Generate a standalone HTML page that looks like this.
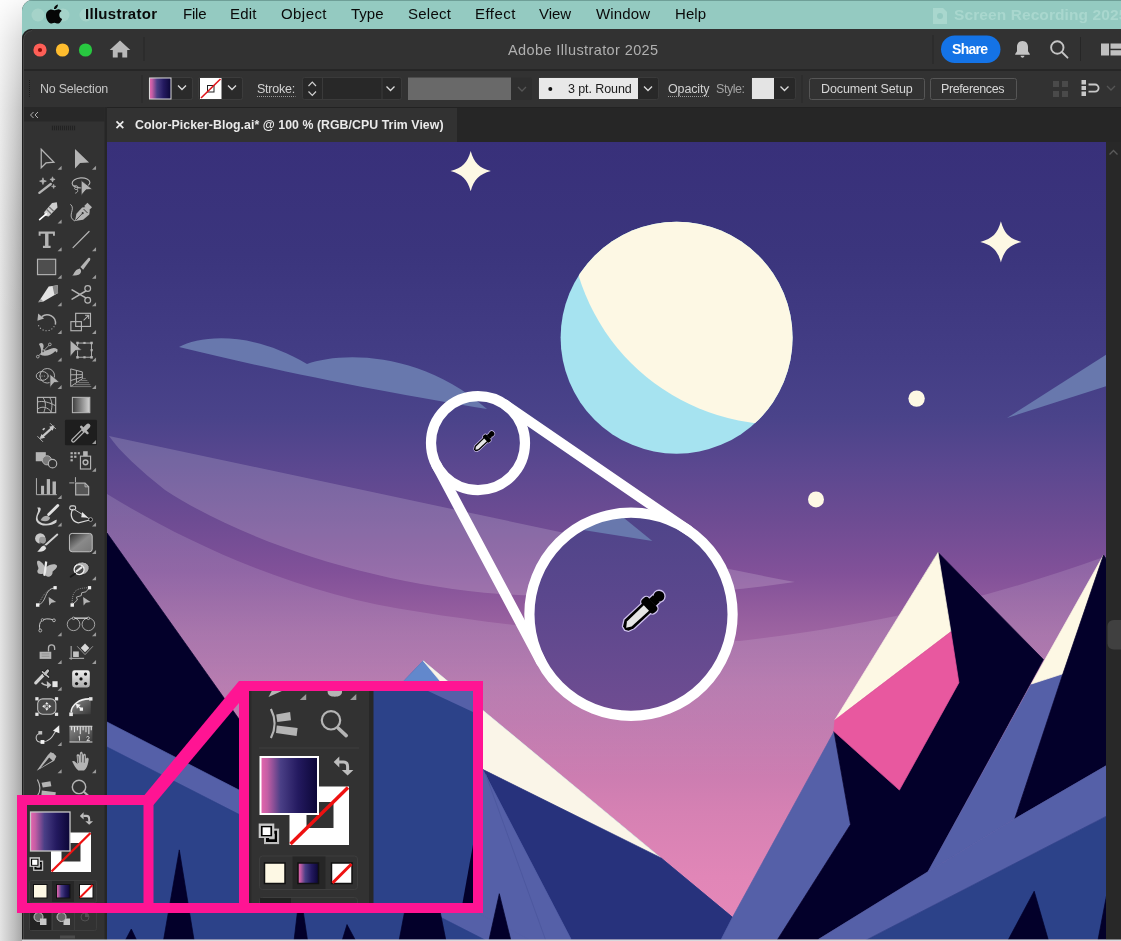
<!DOCTYPE html>
<html><head><meta charset="utf-8"><title>Illustrator</title>
<style>
*{box-sizing:border-box;margin:0;padding:0}
html,body{width:1121px;height:941px;overflow:hidden;background:#e9e9e9;font-family:"Liberation Sans",sans-serif}
#root{position:absolute;left:0;top:0;width:1121px;height:941px;overflow:hidden;
 background:linear-gradient(180deg,rgba(255,255,255,0.92) 0px,rgba(255,255,255,0.6) 40px,rgba(255,255,255,0.3) 110px,rgba(255,255,255,0.08) 220px,rgba(255,255,255,0) 320px),linear-gradient(90deg,#e4e4e4 0px,#d2d2d2 7px,#c0c0c0 14px,#adadad 20px,#a2a2a2 22px)}
.abs{position:absolute}
#win{position:absolute;left:22px;top:0;width:1099px;height:940px;background:#323232;border-top-left-radius:11px;overflow:hidden}
#menubar{position:absolute;left:0;top:0;width:1099px;height:42px;background:#94cac1;border-top:1px solid #6f9f98}
#menubar span{position:absolute;top:5px;font-size:15.3px;color:#0a0a0a;white-space:nowrap;line-height:18px}
#titlebar{position:absolute;left:0;top:29px;width:1099px;height:40px;background:#323232;border-top-left-radius:9px}
#ctrl{position:absolute;left:0;top:69px;width:1099px;height:38px;background:#323232;border-top:2px solid #262626}
.t{will-change:transform;position:absolute;white-space:nowrap;line-height:14px;font-size:12px;color:#c6c6c6}
.m{font-size:15.3px;color:#0a0a0a;line-height:18px}
.box{position:absolute;top:78px;height:22px}
svg{position:absolute;left:0;top:0;overflow:visible}
</style></head><body>
<div id="root">
<div id="win">
 <div id="menubar">
 </div>
 <div id="titlebar"></div>
 <div id="ctrl"></div>
</div>
<svg width="1121" height="941" viewBox="0 0 1121 941">
<defs>
 <linearGradient id="sky" gradientUnits="userSpaceOnUse" x1="0" y1="142" x2="0" y2="941">
  <stop offset="0" stop-color="#38307a"/>
  <stop offset="0.14" stop-color="#3b357d"/>
  <stop offset="0.27" stop-color="#433d85"/>
  <stop offset="0.345" stop-color="#4a438a"/>
  <stop offset="0.41" stop-color="#5c4890"/>
  <stop offset="0.475" stop-color="#6e4c93"/>
  <stop offset="0.54" stop-color="#825199"/>
  <stop offset="0.60" stop-color="#98609f"/>
  <stop offset="0.68" stop-color="#b272aa"/>
  <stop offset="0.76" stop-color="#c57aaf"/>
  <stop offset="0.84" stop-color="#d681b3"/>
  <stop offset="0.92" stop-color="#e186b7"/>
  <stop offset="1" stop-color="#e689b9"/>
 </linearGradient>
 <linearGradient id="hz" gradientUnits="userSpaceOnUse" x1="0" y1="494" x2="0" y2="780">
  <stop offset="0" stop-color="#fff" stop-opacity="0.14"/><stop offset="0.5" stop-color="#fff" stop-opacity="0.12"/><stop offset="1" stop-color="#fff" stop-opacity="0"/>
 </linearGradient>
 <clipPath id="cv"><rect x="107" y="142" width="999" height="797.5"/></clipPath>
 <clipPath id="moonclip"><circle cx="676.6" cy="337.7" r="116"/></clipPath>
 <clipPath id="bigc"><circle cx="631" cy="614.3" r="101.6"/></clipPath>
 <linearGradient id="bigfill" gradientUnits="userSpaceOnUse" x1="0" y1="512" x2="0" y2="716">
  <stop offset="0" stop-color="#4e4489"/><stop offset="0.4" stop-color="#5a478d"/><stop offset="1" stop-color="#704d92"/>
 </linearGradient>
</defs>
<g clip-path="url(#cv)">
 <rect x="107" y="142" width="999" height="799" fill="url(#sky)"/>
 <!-- haze band 2 (lower big) -->
 <path d="M107 494 C190 545 300 595 420 612 C520 628 640 640 740 641 C880 625 1000 595 1107 556 V941 H107 Z" fill="url(#hz)"/>
 <!-- haze band 1 -->
 <path d="M109 436 L560 532 C640 550 720 568 795 582 C700 596 600 600 500 594 C380 585 250 545 165 490 C140 470 120 452 109 436 Z" fill="#ffffff" opacity="0.17"/>
 <!-- clouds -->
 <path d="M179 347 C200 336 250 330 307 364 C340 352 420 350 487 409 C400 395 280 372 179 347 Z" fill="#6878ad"/>
 <path d="M1007 418 L1107 354 V386 Z" fill="#6878ad"/>
 <!-- stars -->
 <path d="M470.7 150.9 C474.1 162.9 478.9 167.7 490.9 171.1 C478.9 174.5 474.1 179.3 470.7 191.3 C467.3 179.3 462.5 174.5 450.5 171.1 C462.5 167.7 467.3 162.9 470.7 150.9 Z" fill="#fdf8e4"/>
 <path d="M1000.9 221.3 C1004.3 233.7 1009.1 238.5 1021.5 241.9 C1009.1 245.3 1004.3 250.1 1000.9 262.5 C997.5 250.1 992.7 245.3 980.3 241.9 C992.7 238.5 997.5 233.7 1000.9 221.3 Z" fill="#fdf8e4"/>
 <circle cx="916.6" cy="398.6" r="8.2" fill="#fdf8e4"/>
 <circle cx="816" cy="499.4" r="8" fill="#fdf8e4"/>
 <!-- moon -->
 <circle cx="676.6" cy="337.7" r="116" fill="#a6e3f0"/>
 <circle cx="779.5" cy="214.5" r="210" fill="#fdf8e4" clip-path="url(#moonclip)"/>
 <!-- left dark mountain -->
 <path d="M107 533 L300 805 L300 941 L107 941 Z" fill="#03002a" stroke="#03002a" stroke-width="0.700"/>
 <!-- central peak -->
 <path d="M423.200 660.800 L380 706 L330 800 L483 941 L740 941 L732.500 917.300 Z" fill="#5560a8" stroke="#5560a8" stroke-width="0.700"/>
 <path d="M423.200 660.800 L404 681 L440 681 Z" fill="#6288cc" stroke="#6288cc" stroke-width="0.700"/>
 <path d="M423.200 660.800 L661 857.900 L483 769.600 L440 681 Z" fill="#faf5e8" stroke="#faf5e8" stroke-width="0.700"/>
 <path d="M483 769.600 L661 857.900 L732.500 917.300 L720.400 941 L572 941 Z" fill="#27327c" stroke="#27327c" stroke-width="0.700"/>
 <path d="M483 770 L572 941 L440 941 L400 800 Z" fill="#5560a8" stroke="#5560a8" stroke-width="0.700"/>
 <path d="M485.600 774 L546 941" stroke="#4d589f" stroke-width="1" fill="none"/>
 <!-- left band + blue -->
 <path d="M107 722 L532 941 L107 941 Z" fill="#5560a8" stroke="#5560a8" stroke-width="0.700"/>
 <path d="M107 747 L487 941 L107 941 Z" fill="#2c4289" stroke="#2c4289" stroke-width="0.700"/>
 <path d="M179.300 849.900 L163.400 941 L194.200 941 Z" fill="#03002a" stroke="#03002a" stroke-width="0.700"/>
 <path d="M131.300 929 L125 941 L137 941 Z" fill="#03002a" stroke="#03002a" stroke-width="0.700"/>
 <path d="M300 890 L294 941 L307.600 941 Z" fill="#03002a" stroke="#03002a" stroke-width="0.700"/>
 <path d="M347 924.600 L342 941 L355.800 941 Z" fill="#03002a" stroke="#03002a" stroke-width="0.700"/>
 <path d="M422 821 L399 941 L446 941 Z" fill="#03002a" stroke="#03002a" stroke-width="0.700"/>
 <path d="M499.300 893.700 L488.800 941 L511 941 Z" fill="#03002a" stroke="#03002a" stroke-width="0.700"/>
 <!-- right mountains -->
 <path d="M834 731.6 L850.5 824.5 L776.6 941 L720.4 941 L732.5 917.3 Z" fill="#5560a8" stroke="#5560a8" stroke-width="0.700"/>
 <path d="M938 552.4 L1043.4 659.5 L928 871.7 L815.8 941 L776.6 941 L850.5 824.5 L834 731.3 Z" fill="#03002a" stroke="#03002a" stroke-width="0.700"/>
 <path d="M938 552.4 L950.9 631.7 L834.9 719.9 Z" fill="#fdf8e4" stroke="#fdf8e4" stroke-width="0.700"/>
 <path d="M834.9 720 L950.9 631.7 L958.9 682.7 L899.4 790.1 L833.8 731.3 Z" fill="#e8589f" stroke="#e8589f" stroke-width="0.700"/>
 <path d="M1031.4 684 L1062.9 673.8 L1014.8 818.8 L928 871.7 Z" fill="#5560a8" stroke="#5560a8" stroke-width="0.700"/>
 <path d="M1103.5 555 L1045 659.5 L1031.4 684 L1062.9 673.8 Z" fill="#fdf8e4" stroke="#fdf8e4" stroke-width="0.700"/>
 <path d="M1103.5 555 L1107 560 L1107 765.2 L1014.8 818.8 L1062.9 673.8 Z" fill="#03002a" stroke="#03002a" stroke-width="0.700"/>
 <path d="M815.8 941 L928 871.7 L1014.8 818.8 L1107 765.2 L1107 815.9 L864.4 941 Z" fill="#5560a8" stroke="#5560a8" stroke-width="0.700"/>
 <path d="M864.4 941 L1107 815.9 L1107 941 Z" fill="#2c4289" stroke="#2c4289" stroke-width="0.700"/>
 <path d="M1034.2 891.2 L1007.6 941 L1048.6 941 Z" fill="#03002a" stroke="#03002a" stroke-width="0.700"/>
 <path d="M1107 893 L1097.8 941 L1107 941 Z" fill="#03002a" stroke="#03002a" stroke-width="0.700"/>
 <!-- magnifier -->
 <circle cx="631" cy="614.3" r="101.6" fill="url(#bigfill)"/>
 <g clip-path="url(#bigc)"><path d="M560 515 L624 518 L652.3 541 L583 530 Z" fill="#6878ad"/></g>
 <g fill="none" stroke="#ffffff" stroke-width="10.2">
  <circle cx="631" cy="614.3" r="101.6"/>
  <circle cx="478" cy="443.1" r="47"/>
  <path d="M436.5 465.2 L541.3 662 M504.6 404.3 L688.5 530.5" stroke-linecap="round"/>
 </g>
<g transform="translate(623.700,629.100) rotate(-42.900)">
  <g fill="#cfc2ee" stroke="#cfc2ee" stroke-width="2.600" stroke-linejoin="round">
   <path d="M0.500 1.500 L1.500 -2.500 L7 -6.200 L33 -6.200 V6.200 H8 L2.500 4.500 Z"/>
   <rect x="30.500" y="-9" width="9" height="18" rx="3.500"/>
   <rect x="39" y="-4.800" width="5.500" height="9.600"/>
   <circle cx="48.200" cy="0" r="5.400"/>
  </g>
  <g fill="#000000">
   <path d="M0.500 1.500 L1.500 -2.500 L7 -6.200 L33 -6.200 V6.200 H8 L2.500 4.500 Z"/>
   <rect x="30.500" y="-9" width="9" height="18" rx="3.500"/>
   <rect x="39" y="-4.800" width="5.500" height="9.600"/>
   <circle cx="48.200" cy="0" r="5.400"/>
  </g>
  <path d="M2.800 0.600 L7.500 -3.300 L31 -3.800 L31 3.800 L7.500 3.500 Z" fill="#e6e6e6"/>
 </g>
<g transform="translate(474.300,450.600) rotate(-43.800) scale(0.500)">
  <g fill="#cfc2ee" stroke="#cfc2ee" stroke-width="2.600" stroke-linejoin="round">
   <path d="M0.500 1.500 L1.500 -2.500 L7 -6.200 L33 -6.200 V6.200 H8 L2.500 4.500 Z"/>
   <rect x="30.500" y="-9" width="9" height="18" rx="3.500"/>
   <rect x="39" y="-4.800" width="5.500" height="9.600"/>
   <circle cx="48.200" cy="0" r="5.400"/>
  </g>
  <g fill="#000000">
   <path d="M0.500 1.500 L1.500 -2.500 L7 -6.200 L33 -6.200 V6.200 H8 L2.500 4.500 Z"/>
   <rect x="30.500" y="-9" width="9" height="18" rx="3.500"/>
   <rect x="39" y="-4.800" width="5.500" height="9.600"/>
   <circle cx="48.200" cy="0" r="5.400"/>
  </g>
  <path d="M2.800 0.600 L7.500 -3.300 L31 -3.800 L31 3.800 L7.500 3.500 Z" fill="#e6e6e6"/>
 </g>
</g>
</svg>
<svg width="1121" height="941" viewBox="0 0 1121 941">
<defs>
 <linearGradient id="fillg" x1="0" y1="0" x2="1" y2="0">
  <stop offset="0" stop-color="#e765ad"/><stop offset="0.12" stop-color="#c45ea5"/><stop offset="0.35" stop-color="#4a3f86"/><stop offset="0.65" stop-color="#241a60"/><stop offset="1" stop-color="#0b0636"/>
 </linearGradient>
</defs>
<!-- menubar icons -->
<g opacity="0.35" fill="#c6e6d8">
 <circle cx="38" cy="15" r="6.5"/><circle cx="63" cy="15" r="6.5"/><circle cx="86" cy="15" r="6.5"/>
</g>
<g id="apple" fill="#060606">
 <path d="M58.6 9.3 C57.3 9.3 55.9 10.2 55.0 10.2 C54.0 10.2 52.8 9.4 51.4 9.4 C48.7 9.4 46.0 11.7 46.0 15.6 C46.0 19.6 48.9 23.6 50.9 23.6 C52.0 23.6 52.9 22.8 54.4 22.8 C55.9 22.8 56.5 23.6 57.8 23.6 C59.8 23.6 61.5 20.6 62.1 18.9 C60.3 18.2 59.3 16.6 59.3 14.9 C59.3 13.3 60.2 11.9 61.6 11.1 C60.8 10.0 59.7 9.3 58.6 9.3 Z"/>
 <path d="M57.9 4.6 C58.0 6.0 57.4 7.1 56.7 7.9 C56.0 8.7 54.9 9.2 54.0 9.1 C53.9 7.9 54.5 6.7 55.2 6.0 C55.9 5.2 57.0 4.7 57.9 4.6 Z"/>
</g>
<g fill="#a9d7ce"><path d="M933 8 H943 L947 12 V24 H933 Z"/><circle cx="940" cy="16" r="3" fill="#94cac1"/></g>
<!-- traffic lights -->
<circle cx="40" cy="50" r="6.6" fill="#fe5f57"/><circle cx="40" cy="50" r="2.1" fill="#8c0a04"/>
<circle cx="62.5" cy="50" r="6.6" fill="#febc2e"/>
<circle cx="85.5" cy="50" r="6.6" fill="#28c840"/>
<!-- home -->
<path d="M120 40.5 L130.3 50 H127.2 V57.6 H122.3 V52.4 H117.7 V57.6 H112.8 V50 H109.7 Z" fill="#b8b8b8"/>
<rect x="143.5" y="37" width="1" height="24" fill="#262626"/>
<!-- title right -->
<rect x="932.5" y="35" width="1" height="29" fill="#262626"/>
<rect x="941" y="35.5" width="59.5" height="27.5" rx="13.75" fill="#1473e6"/>
<g fill="#c4c4c4">
 <path d="M1022.5 41 C1026.2 41 1028 43.8 1028 47 V51.2 L1029.8 54 V54.8 H1015.2 V54 L1017 51.2 V47 C1017 43.8 1018.8 41 1022.5 41 Z"/>
 <path d="M1020.6 55.8 H1024.4 C1024.4 56.9 1023.6 57.7 1022.5 57.7 C1021.4 57.7 1020.6 56.9 1020.6 55.8 Z"/>
</g>
<g fill="none" stroke="#c4c4c4" stroke-width="1.9"><circle cx="1057.3" cy="47.5" r="6.2"/><path d="M1061.8 52 L1067.5 57.7" stroke-linecap="round"/></g>
<rect x="1080" y="37" width="1" height="24" fill="#262626"/>
<g fill="#c0c0c0"><rect x="1101" y="43.5" width="8" height="12"/><rect x="1110.5" y="43.5" width="11" height="5.2"/><rect x="1110.5" y="50.2" width="11" height="5.3"/></g>
<!-- control bar -->
<g fill="#1c1c1c"><rect x="29" y="80" width="1" height="1"/><rect x="29" y="82" width="1" height="1"/><rect x="29" y="84" width="1" height="1"/><rect x="29" y="86" width="1" height="1"/><rect x="29" y="88" width="1" height="1"/><rect x="29" y="90" width="1" height="1"/><rect x="29" y="92" width="1" height="1"/><rect x="29" y="94" width="1" height="1"/><rect x="29" y="96" width="1" height="1"/></g>
<rect x="141.5" y="75" width="1" height="28" fill="#282828"/>
<!-- fill swatch -->
<rect x="148.5" y="77.5" width="44" height="22" rx="2" fill="#2a2a2a" stroke="#3c3c3c"/>
<rect x="149.5" y="78" width="21.5" height="21" fill="url(#fillg)" stroke="#d8d8d8" stroke-width="1"/>
<path d="M178 85.5 L182 89.5 L186 85.5" fill="none" stroke="#dcdcdc" stroke-width="1.3"/>
<!-- stroke swatch -->
<rect x="198.5" y="77.5" width="44" height="22" rx="2" fill="#2a2a2a" stroke="#3c3c3c"/>
<rect x="200" y="78" width="21.5" height="21" fill="#ffffff"/>
<rect x="207.5" y="85.5" width="6.5" height="6.5" fill="none" stroke="#222" stroke-width="1"/>
<path d="M201 98 L220.5 79" stroke="#e0141a" stroke-width="1.6"/>
<path d="M228 85.5 L232 89.5 L236 85.5" fill="none" stroke="#dcdcdc" stroke-width="1.3"/>
<!-- stroke weight -->
<path d="M257 96.5 H295.5" stroke="#9a9a9a" stroke-width="1" stroke-dasharray="1 1"/>
<rect x="302.5" y="77.5" width="99" height="22" rx="2" fill="#282828" stroke="#3a3a3a"/>
<rect x="322" y="78" width="1" height="21" fill="#3a3a3a"/><rect x="381.5" y="78" width="1" height="21" fill="#3a3a3a"/>
<path d="M308.5 86 L312.3 82.2 L316 86 M308.5 91.5 L312.3 95.3 L316 91.5" fill="none" stroke="#d0d0d0" stroke-width="1.2"/>
<path d="M386.5 86.5 L390.5 90.5 L394.5 86.5" fill="none" stroke="#dcdcdc" stroke-width="1.3"/>
<!-- grey var width -->
<rect x="408" y="77.5" width="124" height="22.5" rx="2" fill="#2e2e2e"/>
<rect x="408" y="77.5" width="103" height="22.5" fill="#696969"/>
<path d="M518 87 L522 91 L526 87" fill="none" stroke="#555" stroke-width="1.3"/>
<!-- brush -->
<rect x="538.5" y="77.5" width="120" height="22" rx="2" fill="#282828" stroke="#3a3a3a"/>
<rect x="539" y="78" width="99" height="21" fill="#e8e8e8"/>
<circle cx="550.3" cy="89" r="2" fill="#111"/>
<path d="M644 86.5 L648 90.5 L652 86.5" fill="none" stroke="#dcdcdc" stroke-width="1.3"/>
<path d="M668 96.5 H710" stroke="#9a9a9a" stroke-width="1" stroke-dasharray="1 1"/>
<!-- style -->
<rect x="751.5" y="77.5" width="44" height="22" rx="2" fill="#282828" stroke="#3a3a3a"/>
<rect x="752" y="78" width="22" height="21" fill="#e4e4e4"/>
<path d="M780.5 86.5 L784.5 90.5 L788.5 86.5" fill="none" stroke="#dcdcdc" stroke-width="1.3"/>
<rect x="801.5" y="75" width="1" height="28" fill="#282828"/>
<rect x="809.5" y="78.500" width="115" height="21" rx="2" fill="#323232" stroke="#565656"/>
<rect x="930.5" y="78.500" width="86" height="21" rx="2" fill="#323232" stroke="#565656"/>
<!-- right icons -->
<g fill="#4a4a4a"><rect x="1053" y="81" width="6" height="6"/><rect x="1062" y="81" width="6" height="6"/><rect x="1053" y="91" width="6" height="6"/><rect x="1062" y="91" width="6" height="6"/></g>
<g fill="#c8c8c8"><rect x="1081.500" y="80" width="4.500" height="4.500"/><rect x="1081.500" y="86" width="4.500" height="4"/><rect x="1081.500" y="91.500" width="4.500" height="4.500"/></g>
<path d="M1088.5 84.5 H1095 A3.6 3.6 0 0 1 1095 91.700 H1088.500" fill="none" stroke="#c8c8c8" stroke-width="1.800"/>
<path d="M1107 86 L1111 90 L1115 86" fill="none" stroke="#555" stroke-width="1.300"/>
<!-- tab bar -->
<rect x="22" y="107" width="1099" height="35" fill="#262626"/>
<rect x="107" y="108" width="350" height="34" fill="#323232"/>
<rect x="22" y="107" width="1099" height="1" fill="#222"/>
<path d="M116.500 121.400 L123.300 128.200 M123.300 121.400 L116.500 128.200" stroke="#ececec" stroke-width="1.700"/>
<!-- tool panel -->
<rect x="22" y="107" width="85" height="834" fill="#323232"/>
<rect x="22" y="107" width="82.500" height="14.500" fill="#282828"/>
<rect x="104.500" y="107" width="2.500" height="834" fill="#262626"/>
<path d="M23.500 941 V40 A9 9 0 0 1 32 30.500" fill="none" stroke="#474747" stroke-width="1"/><path d="M22.500 941 V40 A10 10 0 0 1 32 29.500" fill="none" stroke="#1e1e1e" stroke-width="1"/>
<path d="M33.500 112 L30.500 115 L33.500 118 M38 112 L35 115 L38 118" fill="none" stroke="#b0b0b0" stroke-width="1"/>
<path d="M52.500 125.700 V130.200 M54.500 125.700 V130.200 M56.500 125.700 V130.200 M58.500 125.700 V130.200 M60.500 125.700 V130.200 M62.500 125.700 V130.200 M64.500 125.700 V130.200 M66.500 125.700 V130.200 M68.500 125.700 V130.200 M70.500 125.700 V130.200 M72.500 125.700 V130.200 M74.500 125.700 V130.200" stroke="#222222" stroke-width="1.100"/>
<!-- right scrollbar -->
<rect x="1106" y="142" width="15" height="799" fill="#282828"/>
<path d="M1109.500 154.500 L1113.500 150.500 L1117.500 154.500" fill="none" stroke="#5a5a5a" stroke-width="1.300"/>
<rect x="1107.500" y="620" width="20" height="29.500" rx="6" fill="#404040"/>
<!-- bottom light line -->
<rect x="22" y="939.500" width="1099" height="1.500" fill="#d9d9dd"/>
</svg>
<svg width="1121" height="941" viewBox="0 0 1121 941">
<defs>
 <linearGradient id="gradtool" x1="0" y1="0" x2="1" y2="0"><stop offset="0" stop-color="#3c3c3c"/><stop offset="1" stop-color="#d4d4d4"/></linearGradient>
 <linearGradient id="texg" x1="0" y1="0" x2="1" y2="1"><stop offset="0" stop-color="#2a2a2a"/><stop offset="0.5" stop-color="#8a8a8a"/><stop offset="1" stop-color="#777"/></linearGradient>
 <linearGradient id="dkg" x1="0" y1="0" x2="0" y2="1"><stop offset="0" stop-color="#f0f0f0"/><stop offset="1" stop-color="#aaaaaa"/></linearGradient>
 <linearGradient id="rulg" x1="0" y1="0" x2="1" y2="1"><stop offset="0" stop-color="#8a8a8a"/><stop offset="1" stop-color="#3a3a3a"/></linearGradient>
</defs>
<!-- W140 rows 1-3 -->
<g transform="translate(20,140) scale(0.095643)" fill="#b4b4b4" stroke="none">
 <path d="M222 97 L355 232 L272 240 L222 290 Z" fill="none" stroke="#b4b4b4" stroke-width="13"/>
 <path d="M435 268 V310 H393 Z" fill="#9a9a9a"/>
 <path d="M575 93 L722 235 L628 240 L575 297 Z"/>
 <path d="M795 268 V310 H753 Z" fill="#9a9a9a"/>
 <path d="M202 553 L322 460" stroke="#b4b4b4" stroke-width="24" stroke-linecap="round"/>
 <path d="M240 395 Q240 430 275 430 Q240 430 240 465 Q240 430 205 430 Q240 430 240 395 Z" stroke="#b4b4b4" stroke-width="8"/>
 <path d="M340 385 Q340 412 367 412 Q340 412 340 439 Q340 412 313 412 Q340 412 340 385 Z" stroke="#b4b4b4" stroke-width="8"/>
 <path d="M352 462 Q352 485 375 485 Q352 485 352 508 Q352 485 329 485 Q352 485 352 462 Z" stroke="#b4b4b4" stroke-width="5"/>
 <ellipse cx="638" cy="448" rx="93" ry="52" fill="none" stroke="#b4b4b4" stroke-width="12" transform="rotate(-4 638 448)"/>
 <path d="M562 482 C600 465 625 500 597 515 C572 527 558 500 585 490 M597 515 C612 532 600 550 578 556" fill="none" stroke="#b4b4b4" stroke-width="10"/>
 <path d="M640 422 L758 515 L690 521 L640 580 Z" stroke="#323232" stroke-width="8"/>
 <path d="M385 652 L392 705 L300 800 L262 792 L252 755 L335 660 Z" fill="#cfcfcf"/>
 <path d="M305 700 L352 745 M280 727 L325 772" stroke="#777" stroke-width="14"/>
 <path d="M205 832 L275 772" stroke="#ffffff" stroke-width="17" stroke-linecap="round"/>
 <path d="M435 832 V874 H393 Z" fill="#9a9a9a"/>
 <path d="M575 848 L590 770 L650 705 L692 700 L730 738 L725 778 L660 835 Z"/>
 <path d="M585 838 L648 772" stroke="#323232" stroke-width="9"/><circle cx="655" cy="765" r="11" fill="#323232"/>
 <rect x="-34" y="-24" width="68" height="48" transform="translate(712,697) rotate(45)"/>
 <path d="M665 722 L706 763" stroke="#323232" stroke-width="10"/>
 <path d="M527 672 C590 720 480 800 575 848" fill="none" stroke="#b4b4b4" stroke-width="10"/>
</g>
<!-- W225 rows 4-6 -->
<g transform="translate(20,225) scale(0.095643)" fill="#b4b4b4" stroke="none">
 <path d="M195 68 H365 V112 H345 V92 H298 V218 H320 V240 H240 V218 H262 V92 H215 V112 H195 Z"/>
 <path d="M435 232 V274 H393 Z" fill="#9a9a9a"/>
 <path d="M555 236 L722 68" stroke="#b4b4b4" stroke-width="13" stroke-linecap="round"/>
 <path d="M795 232 V274 H753 Z" fill="#9a9a9a"/>
 <rect x="183" y="358" width="190" height="161" fill="#4e4e4e" stroke="#b4b4b4" stroke-width="12"/>
 <path d="M435 520 V562 H393 Z" fill="#9a9a9a"/>
 <path d="M632 440 L712 348 C728 335 742 350 732 368 L660 468 Z"/>
 <path d="M545 527 C570 520 560 470 625 455 C655 480 640 540 545 527 Z"/>
 <path d="M795 520 V562 H753 Z" fill="#9a9a9a"/>
 <path d="M192 808 L300 642 L395 630 L398 712 L245 800 Z" fill="#e4e4e4"/>
 <path d="M340 640 L395 630 L398 712 L360 730 Z" fill="#888"/>
 <path d="M192 808 L215 772 L245 800 Z" fill="#999"/>
 <path d="M435 808 V850 H393 Z" fill="#9a9a9a"/>
 <circle cx="708" cy="664" r="30" fill="none" stroke="#b4b4b4" stroke-width="13"/>
 <circle cx="708" cy="787" r="30" fill="none" stroke="#b4b4b4" stroke-width="13"/>
 <path d="M688 690 L545 775 M688 762 L545 678" stroke="#b4b4b4" stroke-width="17" stroke-linecap="round"/>
 <path d="M795 808 V850 H753 Z" fill="#9a9a9a"/>
</g>
<!-- W305 rows 7-9 -->
<g transform="translate(20,305) scale(0.095643)" fill="#b4b4b4" stroke="none">
 <path d="M228 122 A88 88 0 0 1 370 205" fill="none" stroke="#b4b4b4" stroke-width="15"/>
 <path d="M190 90 L252 142 L182 165 Z"/>
 <path d="M193 212 A92 92 0 0 0 358 222" fill="none" stroke="#b4b4b4" stroke-width="11" stroke-dasharray="11 21"/>
 <path d="M435 262 V304 H393 Z" fill="#9a9a9a"/>
 <rect x="582" y="87" width="155" height="137" fill="none" stroke="#b4b4b4" stroke-width="12"/>
 <rect x="532" y="174" width="110" height="95" fill="none" stroke="#b4b4b4" stroke-width="12"/>
 <path d="M665 160 L712 113 M680 108 H718 V146" fill="none" stroke="#b4b4b4" stroke-width="11"/>
 <path d="M795 262 V304 H753 Z" fill="#9a9a9a"/>
 <path d="M198 408 C235 375 262 420 238 462 C290 510 320 420 392 462 C395 500 380 505 370 480 C330 520 270 545 212 520 C235 490 215 440 198 408 Z"/>
 <path d="M188 538 L310 415" stroke="#b4b4b4" stroke-width="9"/>
 <circle cx="186" cy="540" r="14" fill="#323232" stroke="#b4b4b4" stroke-width="9"/>
 <circle cx="312" cy="412" r="14" fill="#323232" stroke="#b4b4b4" stroke-width="9"/>
 <circle cx="242" cy="482" r="14" fill="#323232" stroke="#b4b4b4" stroke-width="9"/>
 <path d="M435 550 V592 H393 Z" fill="#9a9a9a"/>
 <rect x="602" y="398" width="145" height="148" fill="none" stroke="#b4b4b4" stroke-width="10"/>
 <rect x="662" y="386" width="24" height="22"/><rect x="662" y="536" width="24" height="22"/><rect x="738" y="460" width="22" height="24"/>
 <rect x="588" y="384" width="26" height="26"/><rect x="735" y="384" width="26" height="26"/><rect x="588" y="534" width="26" height="26"/><rect x="735" y="534" width="26" height="26"/>
 <path d="M525 368 L645 470 L578 476 L525 538 Z" stroke="#323232" stroke-width="6"/>
 <path d="M795 550 V592 H753 Z" fill="#9a9a9a"/>
 <ellipse cx="232" cy="742" rx="62" ry="46" fill="none" stroke="#b4b4b4" stroke-width="10"/>
 <circle cx="285" cy="740" r="76" fill="none" stroke="#b4b4b4" stroke-width="10"/>
 <circle cx="205" cy="742" r="6"/><circle cx="230" cy="742" r="6"/><circle cx="255" cy="742" r="6"/><circle cx="300" cy="742" r="6"/>
 <path d="M313 722 L412 806 L355 812 L313 864 Z" stroke="#323232" stroke-width="8"/>
 <path d="M435 836 V878 H393 Z" fill="#9a9a9a"/>
 <path d="M530 668 V852 L652 772 V700 Z M530 730 L652 728 M530 790 L652 752 M590 683 V812" fill="none" stroke="#b4b4b4" stroke-width="10"/>
 <path d="M655 770 H688 M640 790 H705 M610 812 H722 M575 833 H735 M530 853 H745" stroke="#9c9c9c" stroke-width="7"/>
 <path d="M795 836 V878 H753 Z" fill="#9a9a9a"/>
</g>
<!-- W390 rows 10-12 -->
<g transform="translate(20,390) scale(0.095643)" fill="#b4b4b4" stroke="none">
 <rect x="183" y="77" width="190" height="160" fill="none" stroke="#b4b4b4" stroke-width="12"/>
 <path d="M240 77 C275 130 270 180 248 237 M310 77 C345 130 335 190 320 237 M183 125 C240 110 310 130 373 165 M183 200 C230 165 290 175 335 237" fill="none" stroke="#b4b4b4" stroke-width="10"/>
 <rect x="548" y="77" width="182" height="160" fill="url(#gradtool)" stroke="#b4b4b4" stroke-width="11"/>
 <path d="M222 498 L345 388" stroke="#c8c8c8" stroke-width="22"/>
 <path d="M205 512 L262 500 L225 460 Z M360 372 L305 385 L342 425 Z" fill="#c8c8c8"/>
 <path d="M182 483 L240 542 M315 348 L375 408" stroke="#b4b4b4" stroke-width="10"/>
 <path d="M238 418 L258 400" stroke="#c8c8c8" stroke-width="17"/>
 <rect x="470" y="312" width="335" height="266" rx="14" fill="#1e1e1e"/>
 <path d="M662 423 L557 528" stroke="#b4b4b4" stroke-width="46" stroke-linecap="round"/>
 <path d="M655 430 L558 527" stroke="#1e1e1e" stroke-width="20" stroke-linecap="round"/>
 <path d="M640 385 L705 450" stroke="#b4b4b4" stroke-width="26" stroke-linecap="round"/>
 <path d="M670 418 L712 375" stroke="#b4b4b4" stroke-width="48" stroke-linecap="round"/>
 <path d="M795 522 V564 H753 Z" fill="#9a9a9a"/>
 <rect x="165" y="650" width="105" height="95"/>
 <circle cx="282" cy="735" r="48" fill="#7a7a7a" stroke="#b4b4b4" stroke-width="10"/>
 <circle cx="340" cy="770" r="44" fill="#323232" stroke="#b4b4b4" stroke-width="12"/>
 <rect x="632" y="692" width="106" height="134" fill="none" stroke="#b4b4b4" stroke-width="12"/>
 <rect x="660" y="640" width="48" height="50"/>
 <circle cx="685" cy="756" r="25" fill="none" stroke="#b4b4b4" stroke-width="15"/>
 <rect x="528" y="650" width="24" height="22"/><rect x="566" y="650" width="24" height="22"/><rect x="604" y="650" width="22" height="22"/>
 <rect x="528" y="687" width="24" height="22"/><rect x="566" y="687" width="24" height="22"/><rect x="528" y="724" width="24" height="22"/>
 <path d="M795 812 V854 H753 Z" fill="#9a9a9a"/>
</g>
<!-- W470 rows 13-15 -->
<g transform="translate(20,470) scale(0.095643)" fill="#b4b4b4" stroke="none">
 <path d="M172 85 V258 H385" fill="none" stroke="#b4b4b4" stroke-width="10"/>
 <rect x="220" y="165" width="32" height="90"/><rect x="280" y="95" width="34" height="160"/><rect x="340" y="120" width="36" height="135"/>
 <path d="M435 262 V304 H393 Z" fill="#9a9a9a"/>
 <path d="M580 75 V128 M515 135 H568" stroke="#b4b4b4" stroke-width="10"/>
 <path d="M582 138 H680 L718 176 V260 H582 Z" fill="#555" stroke="#b4b4b4" stroke-width="12"/>
 <path d="M680 138 V176 H718" fill="none" stroke="#b4b4b4" stroke-width="10"/>
 <path d="M178 395 C240 380 215 430 190 470 C160 530 240 590 330 545 C360 530 375 515 385 520 L380 550 C330 590 200 600 170 530 C150 480 215 420 178 395 Z" fill="#d0d0d0"/>
 <path d="M300 465 L395 372" stroke="#e0e0e0" stroke-width="30" stroke-linecap="round"/>
 <path d="M215 525 C230 490 260 475 290 478 L315 500 C310 530 270 550 215 525 Z" fill="#aaa"/>
 <path d="M435 550 V592 H393 Z" fill="#9a9a9a"/>
 <path d="M550 410 C520 470 540 540 610 552 L738 520" fill="none" stroke="#d8d8d8" stroke-width="13"/>
 <path d="M560 408 L738 518" stroke="#d8d8d8" stroke-width="9"/>
 <path d="M650 440 L712 500 L640 495 Z" fill="#e8e8e8"/>
 <rect x="520" y="375" width="62" height="42" rx="20" fill="none" stroke="#d8d8d8" stroke-width="11"/>
 <circle cx="738" cy="518" r="20" fill="#111" stroke="#d0d0d0" stroke-width="7"/>
 <path d="M795 550 V592 H753 Z" fill="#9a9a9a"/>
 <circle cx="212" cy="715" r="54" fill="#c8c8c8"/><circle cx="235" cy="735" r="36" fill="#999"/>
 <path d="M262 790 L390 675" stroke="#d0d0d0" stroke-width="20" stroke-linecap="round"/>
 <path d="M180 852 C210 835 215 800 250 790 L275 815 C265 845 225 862 180 852 Z" fill="#e0e0e0"/>
 <path d="M205 760 L285 800" stroke="#323232" stroke-width="9"/>
 <rect x="517" y="663" width="238" height="192" rx="28" fill="url(#texg)" stroke="#c4c4c4" stroke-width="10"/>
 <path d="M795 836 V878 H753 Z" fill="#9a9a9a"/>
</g>
<!-- W555 rows 16-18 -->
<g transform="translate(20,555) scale(0.095643)" fill="#b4b4b4" stroke="none">
 <path d="M262 130 C230 60 180 45 178 75 C178 110 200 130 190 150 C170 175 185 210 240 195 C250 215 255 225 262 215 Z" fill="#b8b8b8"/>
 <path d="M272 130 C310 90 380 85 388 115 C385 145 350 160 340 175 C345 215 300 245 268 215 Z" fill="#b8b8b8"/>
 <path d="M262 65 L245 215 L268 218 L285 70 Z" fill="#ececec"/>
 <ellipse cx="640" cy="142" rx="85" ry="68" fill="#b0b0b0" stroke="#1a1a1a" stroke-width="8" transform="rotate(-15 640 142)"/>
 <circle cx="618" cy="152" r="52" fill="#4a4a4a" stroke="#f0f0f0" stroke-width="13"/>
 <path d="M585 175 L650 125" stroke="#e8e8e8" stroke-width="22"/>
 <path d="M575 195 L530 228" stroke="#1a1a1a" stroke-width="20" stroke-linecap="round"/>
 <path d="M795 222 V264 H753 Z" fill="#9a9a9a"/>
 <path d="M185 522 C290 500 240 360 365 342" fill="none" stroke="#b4b4b4" stroke-width="10"/>
 <path d="M185 522 C215 500 235 370 365 342" fill="none" stroke="#b4b4b4" stroke-width="8" stroke-dasharray="9 12"/>
 <rect x="167" y="505" width="36" height="36" fill="#f0f0f0"/><rect x="350" y="325" width="34" height="34" fill="#f0f0f0"/>
 <path d="M300 440 L378 492 L330 498 L305 528 Z"/>
 <path d="M545 522 L600 470 L590 440 L640 425 L645 395 L690 385 L725 342" fill="none" stroke="#b4b4b4" stroke-width="10"/>
 <path d="M545 522 C545 380 570 345 725 342" fill="none" stroke="#b4b4b4" stroke-width="8" stroke-dasharray="9 12"/>
 <rect x="528" y="505" width="36" height="36" fill="#f0f0f0"/><rect x="710" y="325" width="34" height="34" fill="#f0f0f0"/>
 <path d="M660 440 L738 492 L690 498 L665 528 Z"/>
 <path d="M212 790 C180 700 240 640 355 680" fill="none" stroke="#d0d0d0" stroke-width="10"/>
 <circle cx="212" cy="790" r="15" fill="#323232" stroke="#d0d0d0" stroke-width="8"/>
 <circle cx="355" cy="683" r="15" fill="#323232" stroke="#d0d0d0" stroke-width="8"/>
 <circle cx="235" cy="678" r="13" fill="#323232" stroke="#d0d0d0" stroke-width="7"/>
 <path d="M435 808 V850 H393 Z" fill="#9a9a9a"/>
 <circle cx="560" cy="725" r="66" fill="none" stroke="#b4b4b4" stroke-width="9"/>
 <circle cx="715" cy="725" r="66" fill="none" stroke="#b4b4b4" stroke-width="9"/>
 <path d="M560 660 H715" stroke="#f0f0f0" stroke-width="12"/>
 <circle cx="560" cy="662" r="13" fill="#323232" stroke="#e0e0e0" stroke-width="7"/><circle cx="715" cy="662" r="13" fill="#323232" stroke="#e0e0e0" stroke-width="7"/>
 <path d="M795 808 V850 H753 Z" fill="#9a9a9a"/>
</g>
<!-- W635 rows 19-21 -->
<g transform="translate(20,635) scale(0.095643)" fill="#b4b4b4" stroke="none">
 <rect x="205" y="175" width="122" height="75"/>
 <path d="M225 198 H308 M225 222 H308" stroke="#8c8c8c" stroke-width="9"/>
 <path d="M298 172 V135 A32 32 0 0 1 362 135 V158" fill="none" stroke="#b4b4b4" stroke-width="14"/>
 <path d="M435 262 V304 H393 Z" fill="#9a9a9a"/>
 <path d="M535 115 V260 M515 245 H670" stroke="#a0a0a0" stroke-width="13"/>
 <rect x="555" y="172" width="60" height="58" fill="#c4c4c4"/>
 <path d="M598 118 L680 205 L762 118" fill="none" stroke="#9a9a9a" stroke-width="10"/>
 <path d="M680 90 L725 135 L680 180 L635 135 Z" fill="#d8d8d8"/>
 <path d="M795 262 V304 H753 Z" fill="#9a9a9a"/>
 <path d="M245 418 L165 500" stroke="#d0d0d0" stroke-width="34" stroke-linecap="round"/>
 <path d="M235 385 L300 440" stroke="#1a1a1a" stroke-width="30" stroke-linecap="round"/>
 <path d="M262 408 L290 375" stroke="#1a1a1a" stroke-width="46" stroke-linecap="round"/>
 <path d="M235 385 L300 440" stroke="#c0c0c0" stroke-width="16" stroke-linecap="round"/>
 <path d="M262 408 L290 375" stroke="#c0c0c0" stroke-width="30" stroke-linecap="round"/>
 <path d="M225 500 C245 525 270 530 300 522" fill="none" stroke="#c0c0c0" stroke-width="15"/>
 <path d="M280 480 L330 522 L285 560 Z" fill="#c0c0c0"/>
 <rect x="335" y="480" width="62" height="68" fill="#e4e4e4" stroke="#1a1a1a" stroke-width="6"/>
 <path d="M435 540 V582 H393 Z" fill="#9a9a9a"/>
 <rect x="545" y="368" width="185" height="182" rx="26" fill="url(#dkg)"/>
 <circle cx="592" cy="408" r="17" fill="#111"/><circle cx="685" cy="408" r="17" fill="#111"/><circle cx="638" cy="460" r="17" fill="#111"/><circle cx="592" cy="508" r="17" fill="#111"/><circle cx="685" cy="508" r="17" fill="#111"/>
 <rect x="185" y="668" width="190" height="160" rx="52" fill="#4a4a4a" stroke="#c0c0c0" stroke-width="11"/>
 <rect x="160" y="650" width="34" height="34" fill="#e4e4e4"/><rect x="365" y="650" width="34" height="34" fill="#e4e4e4"/><rect x="160" y="812" width="34" height="34" fill="#e4e4e4"/><rect x="365" y="812" width="34" height="34" fill="#e4e4e4"/>
 <path d="M280 700 L300 725 H262 Z M280 792 L300 767 H262 Z M232 746 L258 726 V766 Z M328 746 L302 726 V766 Z" fill="#f0f0f0"/>
 <circle cx="280" cy="746" r="15" fill="none" stroke="#f0f0f0" stroke-width="7"/>
 <path d="M535 828 C535 730 620 668 740 668 V828 Z" fill="url(#rulg)"/>
 <path d="M535 810 C535 730 620 668 722 668" fill="none" stroke="#f0f0f0" stroke-width="16"/>
 <rect x="515" y="810" width="38" height="38" fill="#e4e4e4"/><rect x="722" y="650" width="36" height="36" fill="#e4e4e4"/>
 <path d="M592 728 L645 780" stroke="#f0f0f0" stroke-width="13"/><path d="M585 720 L635 730 L595 770 Z" fill="#f0f0f0"/>
 <rect x="625" y="758" width="34" height="34" fill="#f0f0f0"/>
</g>
<!-- W715 rows 22-24 -->
<g transform="translate(20,715) scale(0.095643)" fill="#b4b4b4" stroke="none">
 <path d="M215 190 C150 200 150 290 235 285 C330 275 350 200 385 150" fill="none" stroke="#c8c8c8" stroke-width="11"/>
 <path d="M410 108 L345 165 L412 190 Z" fill="#f0f0f0"/>
 <rect x="192" y="168" width="40" height="36" fill="#c0c0c0"/>
 <rect x="215" y="262" width="40" height="40" fill="#f4f4f4"/>
 <path d="M435 282 V324 H393 Z" fill="#9a9a9a"/>
 <rect x="517" y="118" width="240" height="165" fill="url(#rulg)"/>
 <path d="M517 118 H757 M517 282 H757" stroke="#d8d8d8" stroke-width="11"/>
 <path d="M540 120 V160 M570 120 V180 M600 120 V160 M630 120 V200 M660 120 V160 M690 120 V180 M720 120 V200 M745 120 V160" stroke="#f0f0f0" stroke-width="10"/>
 <path d="M610 230 L622 222 V268 M695 232 C705 218 730 225 722 245 L698 268 H730" fill="none" stroke="#f0f0f0" stroke-width="9"/>
 <path d="M175 582 L290 420 L345 395 L378 430 L355 480 Z M215 555 L305 445 L340 475 Z" fill-rule="evenodd"/>
 <path d="M290 420 L322 388 L380 432 L355 480 Z"/>
 <path d="M435 568 V610 H393 Z" fill="#9a9a9a"/>
 <path d="M545 485 C565 470 585 490 600 515 L592 425 C592 405 618 405 622 425 L628 395 C632 378 655 380 655 400 L660 420 C662 400 688 402 688 422 L690 460 C695 440 722 445 718 468 C710 520 700 560 670 580 H610 C580 560 565 520 545 485 Z"/>
 <path d="M607 430 L612 500 M641 405 L642 495 M675 425 L672 500" stroke="#323232" stroke-width="7" fill="none"/>
 <path d="M795 568 V610 H753 Z" fill="#9a9a9a"/>
 <path d="M182 675 C215 740 215 800 185 840" fill="none" stroke="#b4b4b4" stroke-width="12"/>
 <path d="M225 708 L318 692 L328 745 L238 758 Z M228 790 L375 808 L365 870 L222 850 Z"/>
 <circle cx="617" cy="752" r="70" fill="none" stroke="#b4b4b4" stroke-width="15"/>
 <path d="M668 802 L730 860" stroke="#b4b4b4" stroke-width="22" stroke-linecap="round"/>
</g>
</svg>
<svg width="1121" height="941" viewBox="0 0 1121 941">
<defs>
 <clipPath id="insetclip"><rect x="244" y="686" width="234" height="222"/></clipPath>
</defs>
<!-- small panel colour controls -->
<g id="colorctl">
 <rect x="51" y="832.500" width="40" height="39.500" fill="#ffffff"/>
 <rect x="61.500" y="843" width="19" height="18.500" fill="#323232"/>
 <path d="M51.500 871.500 L90.500 833" stroke="#ee1111" stroke-width="2.300"/>
 <rect x="30.500" y="812" width="39.500" height="39" fill="url(#fillg)" stroke="#c8c8c8" stroke-width="1.300"/>
<g transform="translate(-144.090,304.500) scale(0.6711)">
 <path d="M339 762 H343.500 Q347.600 762 347.600 766.500 V770.500" fill="none" stroke="#bdbdbd" stroke-width="3"/>
 <path d="M333.700 762 L339.300 756.500 V767.500 Z M341.800 770 H353.400 L347.600 775.400 Z" fill="#bdbdbd"/>
 <rect x="264" y="828.600" width="15.100" height="15.500" fill="#bdbdbd"/>
 <rect x="266" y="830.700" width="11" height="11.300" fill="#000"/>
 <path d="M274 833.700 V838.600 H269.100" fill="none" stroke="#bdbdbd" stroke-width="1.400"/>
 <rect x="258.700" y="823.500" width="15.600" height="14.500" fill="#c8c8c8"/>
 <rect x="260.900" y="825.900" width="11.200" height="10.400" fill="#000"/>
 <rect x="262.600" y="827.300" width="7.800" height="7.700" fill="#fff"/>
</g>
 <!-- 3 buttons -->
 <rect x="29.500" y="880.500" width="67" height="22" rx="2" fill="#323232" stroke="#3d3d3d"/>
 <rect x="52" y="881" width="22" height="21" fill="#262626"/>
 <rect x="33.500" y="884.500" width="13.500" height="13.500" fill="#fdf8e4" stroke="#111" stroke-width="1"/>
 <rect x="56.500" y="884.500" width="13.500" height="13.500" fill="url(#fillg)" stroke="#111" stroke-width="1"/>
 <rect x="79.500" y="884.500" width="13.500" height="13.500" fill="#fff" stroke="#111" stroke-width="1"/>
 <path d="M80 897.500 L92.500 885" stroke="#ee1111" stroke-width="2"/>
<g transform="translate(0,-1.500)">
 <!-- draw modes -->
 <rect x="29.500" y="910" width="67" height="22" rx="2" fill="#323232" stroke="#3d3d3d"/>
 <rect x="30" y="910.500" width="21" height="21" fill="#222"/>
 <rect x="52" y="910.500" width="1" height="21" fill="#3d3d3d"/><rect x="74" y="910.500" width="1" height="21" fill="#3d3d3d"/>
 <circle cx="38.500" cy="918.500" r="4.500" fill="#666" stroke="#c8c8c8" stroke-width="1"/><rect x="40" y="920" width="6.500" height="6.500" fill="#c8c8c8"/>
 <rect x="63.500" y="920" width="6.500" height="6.500" fill="#c8c8c8"/><circle cx="61.500" cy="918.500" r="4.500" fill="#666" stroke="#c8c8c8" stroke-width="1"/>
 <circle cx="85" cy="918.500" r="4" fill="none" stroke="#505050" stroke-width="1"/><path d="M85 918.500 V914.500 A4 4 0 0 1 89 918.500 Z" fill="#505050"/>
 <rect x="60" y="937" width="15" height="3" fill="#4a4a4a"/>
</g>
</g>
<!-- inset content -->
<g clip-path="url(#insetclip)">
 <rect x="244" y="686" width="234" height="222" fill="#2c4289"/>
 <path d="M428 691 H473 V712 Z" fill="#5560a8"/>
 <path d="M462.500 903 L473 844.700 V903 Z" fill="#03002a"/>
 <rect x="249" y="686" width="122" height="222" fill="#323232"/>
 <rect x="249" y="686" width="2.500" height="222" fill="#2a2a2a"/>
 <rect x="369" y="686" width="4.500" height="222" fill="#272727"/>
 <!-- partial icons top -->
 <path d="M268.500 697 L283 690.500 H272 Z" fill="#b4b4b4"/>
 <path d="M306.200 694 V700 H299.800 Z M356.300 694 V700 H350 Z" fill="#9a9a9a"/>
 <path d="M327.600 690 H342 V692 C342 695 339 696.700 334.800 696.700 C330.500 696.700 327.600 695 327.600 692 Z" fill="#b4b4b4"/>
 <!-- slice -->
 <path d="M270.900 709 C276 719 276 728 270.900 738" fill="none" stroke="#b4b4b4" stroke-width="2.200"/>
 <path d="M276.200 714.400 L290.100 712 L291 720.300 L277.300 721.900 Z M276.800 725.600 L297.600 728.100 L296.600 736.100 L276 733.100 Z" fill="#b4b4b4"/>
 <!-- zoom -->
 <circle cx="331" cy="720.300" r="9.200" fill="none" stroke="#b4b4b4" stroke-width="2.200"/>
 <path d="M338.300 728.300 L346.200 735.600" stroke="#b4b4b4" stroke-width="3.600" stroke-linecap="round"/>
 <rect x="259" y="747.500" width="100" height="1" fill="#3e3e3e"/>
 <!-- stroke big -->
 <rect x="289.500" y="786.500" width="59.500" height="58.500" fill="#ffffff"/>
 <rect x="306.500" y="802" width="27" height="26" fill="#323232"/>
 <path d="M290.500 844 L348 787.500" stroke="#ee1111" stroke-width="3.400"/>
 <rect x="260.500" y="757" width="57.500" height="57" fill="url(#fillg)" stroke="#ffffff" stroke-width="2"/>
<g>
 <path d="M339 762 H343.500 Q347.600 762 347.600 766.500 V770.500" fill="none" stroke="#bdbdbd" stroke-width="3"/>
 <path d="M333.700 762 L339.300 756.500 V767.500 Z M341.800 770 H353.400 L347.600 775.400 Z" fill="#bdbdbd"/>
 <rect x="264" y="828.600" width="15.100" height="15.500" fill="#bdbdbd"/>
 <rect x="266" y="830.700" width="11" height="11.300" fill="#000"/>
 <path d="M274 833.700 V838.600 H269.100" fill="none" stroke="#bdbdbd" stroke-width="1.400"/>
 <rect x="258.700" y="823.500" width="15.600" height="14.500" fill="#c8c8c8"/>
 <rect x="260.900" y="825.900" width="11.200" height="10.400" fill="#000"/>
 <rect x="262.600" y="827.300" width="7.800" height="7.700" fill="#fff"/>
</g>
 <!-- 3 buttons -->
 <rect x="259.500" y="856" width="98" height="33.500" rx="3" fill="#323232" stroke="#3d3d3d"/>
 <rect x="292.500" y="856.500" width="33" height="32.500" fill="#262626"/>
 <rect x="264.500" y="863" width="20.500" height="20.500" fill="#fdf8e4" stroke="#111" stroke-width="1.500"/>
 <rect x="298" y="863" width="20.500" height="20.500" fill="url(#fillg)" stroke="#111" stroke-width="1.500"/>
 <rect x="331.500" y="863" width="20.500" height="20.500" fill="#fff" stroke="#111" stroke-width="1.500"/>
 <path d="M332.500 883 L351.500 864" stroke="#ee1111" stroke-width="3"/>
 <rect x="259.500" y="897.500" width="98" height="20" rx="3" fill="#323232" stroke="#3d3d3d"/>
 <rect x="260" y="898" width="31" height="20" fill="#222"/>
</g>
<!-- pink frames -->
<g fill="none" stroke="#ff1493" stroke-width="10">
 <rect x="22" y="800" width="126.500" height="108"/>
 <rect x="244" y="686" width="234" height="222"/>
 <path d="M148.500 908 H244"/>
</g>
<path d="M144.500 795 L239 681 H244 V697 L153.500 805 H148 Z" fill="#ff1493"/>
</svg>

<div class="t" style="left:40.0px;top:82.0px;font-size:12.5px;line-height:14px;color:#c4c4c4;letter-spacing:-0.234px;">No Selection</div>
<div class="t" style="left:257.0px;top:82.0px;font-size:12.5px;line-height:14px;color:#d2d2d2;letter-spacing:-0.218px;">Stroke:</div>
<div class="t" style="left:567.5px;top:82.0px;font-size:12.5px;line-height:14px;color:#1a1a1a;letter-spacing:-0.094px;">3 pt. Round</div>
<div class="t" style="left:668.0px;top:82.0px;font-size:12.5px;line-height:14px;color:#d2d2d2;letter-spacing:-0.148px;">Opacity</div>
<div class="t" style="left:716.0px;top:82.0px;font-size:12.5px;line-height:14px;color:#a2a2a2;letter-spacing:-0.453px;">Style:</div>
<div class="t" style="left:820.7px;top:82.0px;font-size:12.5px;line-height:14px;color:#d6d6d6;letter-spacing:-0.101px;">Document Setup</div>
<div class="t" style="left:941.0px;top:82.0px;font-size:12.5px;line-height:14px;color:#d6d6d6;letter-spacing:-0.391px;">Preferences</div>
<div class="t" style="left:507.5px;top:43.1px;font-size:14.5px;line-height:14px;color:#b0b0b0;letter-spacing:0.392px;">Adobe Illustrator 2025</div>
<div class="t" style="left:952.3px;top:42.3px;font-size:14px;line-height:14px;color:#ffffff;letter-spacing:-0.705px;font-weight:bold;">Share</div>
<div class="t" style="left:135.0px;top:117.5px;font-size:12.3px;line-height:14px;color:#eaeaea;letter-spacing:0.060px;font-weight:bold;">Color-Picker-Blog.ai* @ 100 % (RGB/CPU Trim View)</div>
<div class="t" style="left:85.0px;top:4.5px;font-size:15px;line-height:18px;color:#0a0a0a;letter-spacing:0.281px;font-weight:bold;">Illustrator</div>
<div class="t" style="left:182.5px;top:4.5px;font-size:15px;line-height:18px;color:#0a0a0a;letter-spacing:-0.224px;">File</div>
<div class="t" style="left:230.0px;top:4.5px;font-size:15px;line-height:18px;color:#0a0a0a;letter-spacing:0.214px;">Edit</div>
<div class="t" style="left:280.5px;top:4.5px;font-size:15px;line-height:18px;color:#0a0a0a;letter-spacing:0.428px;">Object</div>
<div class="t" style="left:350.5px;top:4.5px;font-size:15px;line-height:18px;color:#0a0a0a;letter-spacing:-0.010px;">Type</div>
<div class="t" style="left:407.5px;top:4.5px;font-size:15px;line-height:18px;color:#0a0a0a;letter-spacing:0.259px;">Select</div>
<div class="t" style="left:474.5px;top:4.5px;font-size:15px;line-height:18px;color:#0a0a0a;letter-spacing:0.481px;">Effect</div>
<div class="t" style="left:539.0px;top:4.5px;font-size:15px;line-height:18px;color:#0a0a0a;letter-spacing:-0.083px;">View</div>
<div class="t" style="left:596.0px;top:4.5px;font-size:15px;line-height:18px;color:#0a0a0a;letter-spacing:0.128px;">Window</div>
<div class="t" style="left:675.0px;top:4.5px;font-size:15px;line-height:18px;color:#0a0a0a;letter-spacing:0.047px;">Help</div>
<div class="t" style="left:954.2px;top:5.5px;font-size:15.5px;line-height:18px;color:#a9d7ce;letter-spacing:0.092px;font-weight:bold;">Screen Recording 2025</div>

</div>
</body></html>
